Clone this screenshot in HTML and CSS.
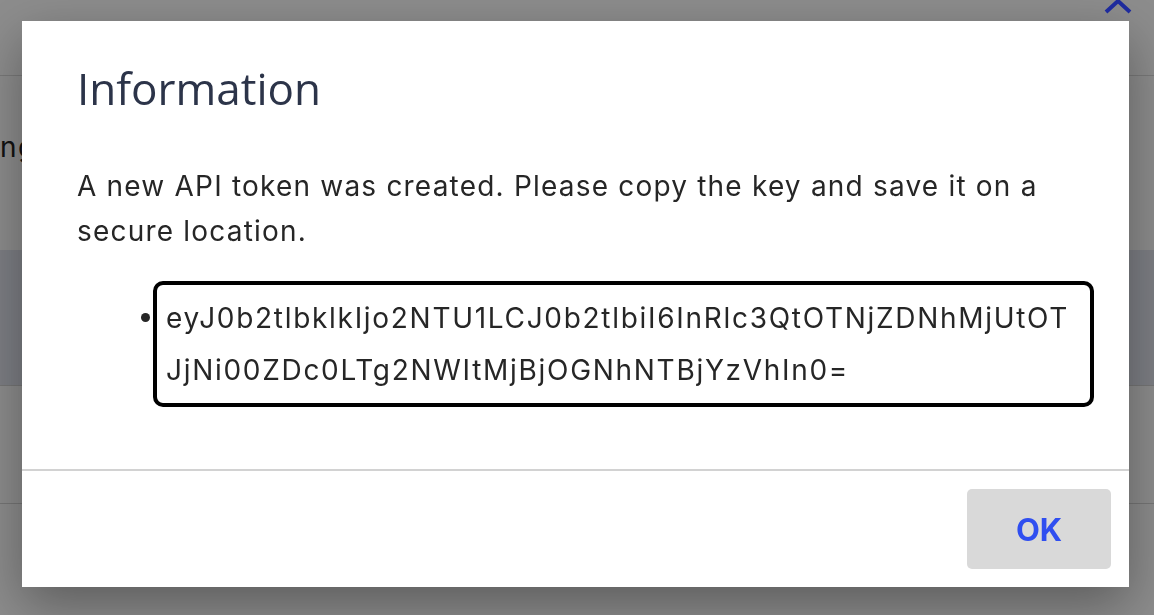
FILE: index.html
```html
<!DOCTYPE html>
<html lang="en">
<head>
  <meta charset="UTF-8">
  <meta name="viewport" content="width=device-width, initial-scale=1.0">
  <title>API Tokens</title>
  <link rel="stylesheet" href="styles.css">
</head>
<body>
  <div class="page">
    <div class="topbar"></div>
    <div class="row row-label"><span class="label">ng</span></div>
    <div class="band"></div>
    <div class="row row-empty"></div>
  </div>

  <div class="overlay">
    <svg class="chevron" width="28" height="16" viewBox="0 0 28 16">
      <path d="M2 13 L14 2 L26 13" fill="none" stroke="#1e2b9c" stroke-width="4"/>
    </svg>
    <div class="modal">
      <div class="modal-body">
        <h2 class="modal-title">Information</h2>
        <p class="modal-text">A new API token was created. Please copy the key and save it on a secure location.</p>
        <ul class="token-list">
          <li class="token-item">
            <span class="bullet"></span>
            <div class="token">eyJ0b2tlbklkIjo2NTU1LCJ0b2tlbiI6InRlc3QtOTNjZDNhMjUtOT<br>JjNi00ZDc0LTg2NWItMjBjOGNhNTBjYzVhIn0=</div>
          </li>
        </ul>
      </div>
      <div class="modal-footer">
        <button class="btn-ok">OK</button>
      </div>
    </div>
  </div>
</body>
</html>
```

FILE: styles.css
```css
body {
  margin: 0;
  font-family: "Inter", "Noto Sans", sans-serif;
  background: #ffffff;
  overflow: hidden;
}

.page {
  height: 615px;
}

.topbar {
  height: 75px;
  border-bottom: 1px solid #dcdcdc;
}

.row-label {
  height: 174px;
  font-size: 28px;
  letter-spacing: 1.5px;
  color: #222;
  padding-top: 54px;
  box-sizing: border-box;
}

.band {
  height: 135px;
  background: #e3e6f0;
  border-bottom: 1px solid #d6d6d6;
}

.row-empty {
  height: 117px;
  border-bottom: 1px solid #d6d6d6;
}

.overlay {
  position: fixed;
  inset: 0;
  background: rgba(0, 0, 0, 0.45);
  padding: 21px 0 0 22px;
}

.chevron {
  position: absolute;
  top: -1px;
  left: 1104px;
}

.modal {
  width: 1107px;
  height: 566px;
  background: #ffffff;
  box-shadow: 0 18px 50px rgba(0, 0, 0, 0.35);
  display: flex;
  flex-direction: column;
}

.modal-body {
  flex: 1;
  padding: 41px 35px 0 55px;
  border-bottom: 2px solid #d2d2d2;
}

.modal-title {
  margin: 0;
  font-family: "Open Sans", sans-serif;
  font-weight: 400;
  font-size: 44px;
  line-height: 52px;
  color: #2c3449;
}

.modal-text {
  margin: 50px 0 0;
  max-width: 985px;
  font-size: 28px;
  letter-spacing: 1.2px;
  line-height: 45px;
  color: #262626;
}

.token-list {
  list-style: none;
  margin: 27px 0 0;
  padding-left: 64px;
}

.token-item {
  display: flex;
  align-items: flex-start;
  gap: 3px;
}

.bullet {
  width: 9px;
  height: 9px;
  margin-top: 32px;
  border-radius: 50%;
  background: #262626;
}

.token {
  width: 941px;
  box-sizing: border-box;
  border: 4px solid #000000;
  border-radius: 10px;
  padding: 7px 9px;
  font-size: 28px;
  letter-spacing: 1.7px;
  line-height: 52px;
  color: #262626;
}

.modal-footer {
  padding: 18px;
  display: flex;
  justify-content: flex-end;
}

.btn-ok {
  width: 144px;
  height: 80px;
  border: none;
  border-radius: 5px;
  background: #d9d9d9;
  color: #2f4ef0;
  font-family: "Inter", sans-serif;
  font-weight: 700;
  font-size: 31px;
}
```
